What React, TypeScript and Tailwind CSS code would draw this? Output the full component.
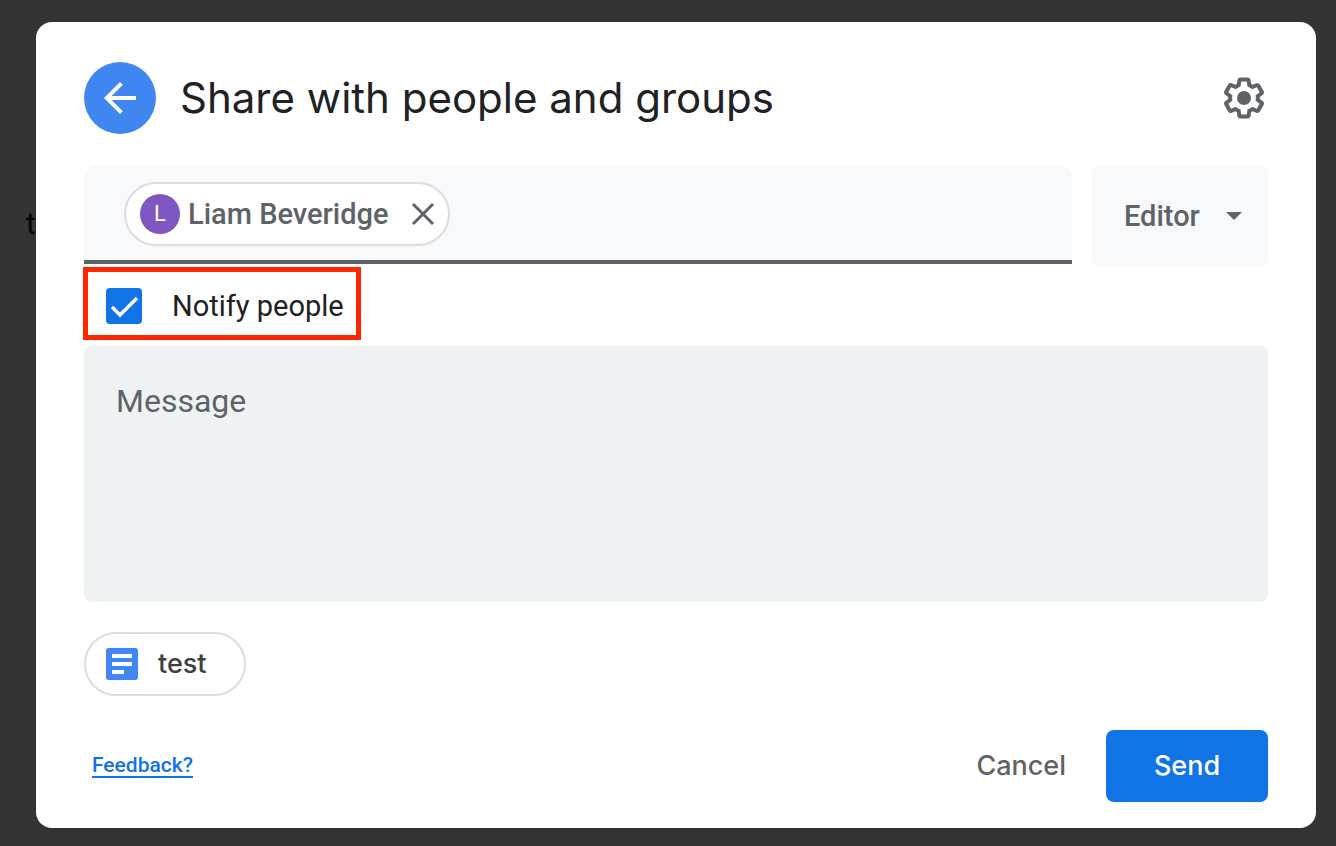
import React, { useState } from 'react';

// Google's settings glyph
const GEAR_PATH =
  'M13.85 22.25h-3.7c-.74 0-1.36-.54-1.45-1.27l-.27-1.89c-.27-.14-.53-.29-.79-.46l-1.8.72c-.7.26-1.47-.03-1.81-.65L2.2 15.53c-.35-.66-.2-1.44.36-1.88l1.53-1.19c-.01-.15-.02-.3-.02-.46 0-.15.01-.31.02-.46l-1.52-1.19c-.59-.45-.74-1.26-.37-1.88l1.85-3.19c.34-.62 1.11-.9 1.79-.63l1.81.73c.26-.17.52-.32.78-.46l.27-1.91c.09-.7.71-1.25 1.44-1.25h3.7c.74 0 1.36.54 1.45 1.27l.27 1.89c.27.14.53.29.79.46l1.8-.72c.71-.26 1.48.03 1.82.65l1.84 3.18c.36.66.2 1.44-.36 1.88l-1.52 1.19c.01.15.02.3.02.46s-.01.31-.02.46l1.52 1.19c.56.45.72 1.23.37 1.86l-1.86 3.22c-.34.62-1.11.9-1.8.63l-1.8-.72c-.26.17-.52.32-.78.46l-.27 1.91c-.1.68-.72 1.22-1.46 1.22zm-3.23-2h2.76l.37-2.55.53-.22c.44-.18.88-.44 1.34-.78l.45-.34 2.38.96 1.38-2.4-2.03-1.58.07-.56c.03-.26.06-.51.06-.78s-.03-.53-.06-.78l-.07-.56 2.03-1.58-1.39-2.4-2.39.96-.45-.35c-.42-.32-.87-.58-1.33-.77l-.52-.22-.37-2.55h-2.76l-.37 2.55-.53.21c-.44.19-.88.44-1.34.79l-.45.33-2.38-.95-1.39 2.39 2.03 1.58-.07.56a7 7 0 0 0-.06.79c0 .26.02.53.06.78l.07.56-2.03 1.58 1.38 2.4 2.39-.96.45.35c.43.33.86.58 1.33.77l.53.22.38 2.55z';

export default function App() {
  const [notify, setNotify] = useState(true);
  const [role, setRole] = useState('Editor');
  const [message, setMessage] = useState('');
  const [query, setQuery] = useState('');

  return (
    <div className="relative min-h-screen bg-[#333333] pt-[22px] pr-5 pb-[18px] pl-9 font-['Roboto',sans-serif]">
      {/* Document text behind the dialog */}
      <span className="absolute top-[208px] left-[26px] text-[29px] leading-8 text-black" aria-hidden="true">
        test
      </span>

      <div
        role="dialog"
        aria-labelledby="share-title"
        className="relative rounded-2xl bg-white px-12 pt-10 pb-[26px]"
      >
        {/* Header */}
        <header className="flex items-center gap-6">
          <button
            aria-label="Back"
            className="flex size-[72px] shrink-0 items-center justify-center rounded-full bg-[#4086f1]"
          >
            <svg className="size-12" viewBox="0 0 24 24" fill="#fff">
              <path d="M20 11H7.83l5.59-5.59L12 4l-8 8 8 8 1.41-1.41L7.83 13H20v-2z" />
            </svg>
          </button>
          <h1
            id="share-title"
            className="flex-1 font-['Inter',sans-serif] text-[42px] leading-[56px] text-[#202124]"
          >
            Share with people and groups
          </h1>
          <button aria-label="Settings" className="size-12 shrink-0">
            <svg className="size-12" viewBox="0 0 24 24" fill="#5f6368">
              <path d={GEAR_PATH} />
              <circle cx="12" cy="12" r="3.5" />
            </svg>
          </button>
        </header>

        {/* Recipients and role */}
        <div className="mt-8 flex items-start gap-5">
          <div className="flex min-w-0 flex-1 items-center gap-4 rounded-t-xl border-b-4 border-[#5f6368] bg-[#f8f9fb] pt-4 pr-4 pb-[14px] pl-10">
            <div className="flex h-16 w-[326px] shrink-0 items-center rounded-full border-2 border-[#dadce0] bg-white pr-[13px] pl-[14px]">
              <span className="flex size-10 shrink-0 items-center justify-center rounded-full bg-[#7e57c2] text-[22px] leading-10 text-white">
                L
              </span>
              <span className="ml-2 flex-1 text-[29px] leading-8 font-medium text-[#5f6368]">
                Liam Beveridge
              </span>
              <button aria-label="Remove Liam Beveridge" className="size-6 shrink-0">
                <svg className="size-6" viewBox="0 0 24 24" stroke="#5f6368" strokeWidth="3">
                  <path d="M2 2l20 20M22 2L2 22" />
                </svg>
              </button>
            </div>
            <input
              aria-label="Add people and groups"
              className="min-w-0 flex-1 bg-transparent text-[29px] leading-8 outline-none"
              value={query}
              onChange={(e) => setQuery(e.target.value)}
            />
          </div>

          <div className="relative w-44 shrink-0">
            <select
              aria-label="Role"
              className="h-[100px] w-full appearance-none rounded-lg bg-[#f8f9fb] pl-8 text-[29px] leading-8 font-medium text-[#5f6368] outline-none"
              value={role}
              onChange={(e) => setRole(e.target.value)}
            >
              <option>Viewer</option>
              <option>Commenter</option>
              <option>Editor</option>
            </select>
            <svg
              className="pointer-events-none absolute inset-y-0 right-[26px] my-auto h-2 w-4"
              viewBox="0 0 16 8"
              fill="#5f6368"
            >
              <path d="M0 0h16L8 8z" />
            </svg>
          </div>
        </div>

        {/* Notify toggle, highlighted */}
        <div className="flex pt-px pb-[6px]">
          <label className="-ml-px flex h-[73px] w-[278px] items-center gap-[30px] border-[5px] border-[#ff2600] pt-1 pl-[18px] text-[29px] leading-8 text-[#202124]">
            <span className="relative size-9 shrink-0">
              <input
                type="checkbox"
                className="block size-9 appearance-none rounded border-2 border-[#5f6368] checked:border-[#1073e6] checked:bg-[#1073e6]"
                checked={notify}
                onChange={(e) => setNotify(e.target.checked)}
              />
              {notify && (
                <svg
                  className="pointer-events-none absolute inset-0 size-9"
                  viewBox="0 0 36 36"
                  fill="none"
                  stroke="#fff"
                  strokeWidth="3.5"
                >
                  <path d="M6 19l8 8L31 10" />
                </svg>
              )}
            </span>
            Notify people
          </label>
        </div>

        <textarea
          aria-label="Message"
          placeholder="Message"
          className="block h-64 w-full resize-none rounded-lg bg-[#eef2f3] px-8 py-9 text-[32px] leading-[38px] text-[#202124] outline-none placeholder:text-[#5f6368]"
          value={message}
          onChange={(e) => setMessage(e.target.value)}
        />

        {/* Attached document */}
        <div className="mt-[30px] flex">
          <button className="flex h-16 w-[162px] items-center gap-5 rounded-full border-2 border-[#dadce0] pl-5 font-['Inter',sans-serif] text-[27px] leading-8 font-medium text-[#3c4043]">
            <svg className="size-8" viewBox="0 0 32 32">
              <rect width="32" height="32" rx="3" fill="#4086f4" />
              <path d="M6 6h20v4H6zM6 14h20v4H6zM6 22h12v4H6z" fill="#fff" />
            </svg>
            test
          </button>
        </div>

        {/* Footer */}
        <footer className="mt-[34px] flex items-center justify-between pl-2">
          <a
            href="#feedback"
            className="border-b-2 border-[#1073e6] text-[21px] leading-[22px] font-medium text-[#1073e6]"
          >
            Feedback?
          </a>
          <div className="flex items-center gap-6 font-['Inter',sans-serif] text-[27px] leading-8 font-medium">
            <button className="h-[72px] px-4 text-[#5f6368]">Cancel</button>
            <button className="h-[72px] w-[162px] rounded-lg bg-[#1073e6] text-white">Send</button>
          </div>
        </footer>
      </div>
    </div>
  );
}
